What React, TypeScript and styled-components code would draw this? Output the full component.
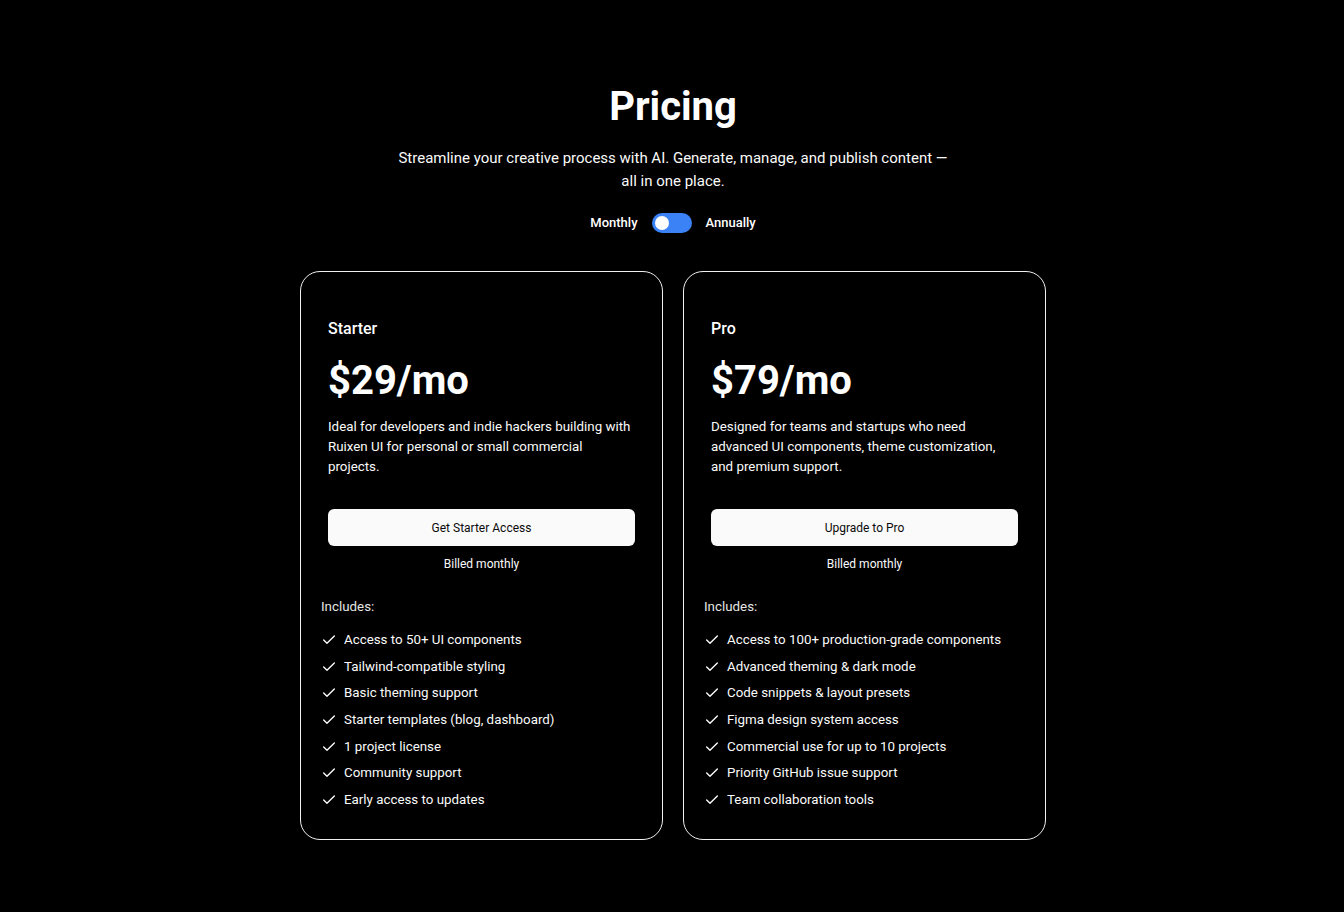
import React, { useState } from "react";
import styled, { createGlobalStyle } from "styled-components";
import { Check } from "lucide-react";

const GlobalStyle = createGlobalStyle`
  html, body {
    margin: 0;
    padding: 0;
    background: #000;
  }
  body {
    font-family: Roboto, "Liberation Sans", Arial, sans-serif;
    color: #fafafa;
    -webkit-font-smoothing: antialiased;
  }
  * {
    box-sizing: border-box;
  }
`;

type Plan = {
  name: string;
  price: string;
  description: string;
  cta: string;
  features: string[];
};

const plans: Plan[] = [
  {
    name: "Starter",
    price: "$29/mo",
    description:
      "Ideal for developers and indie hackers building with Ruixen UI for personal or small commercial projects.",
    cta: "Get Starter Access",
    features: [
      "Access to 50+ UI components",
      "Tailwind-compatible styling",
      "Basic theming support",
      "Starter templates (blog, dashboard)",
      "1 project license",
      "Community support",
      "Early access to updates",
    ],
  },
  {
    name: "Pro",
    price: "$79/mo",
    description:
      "Designed for teams and startups who need advanced UI components, theme customization, and premium support.",
    cta: "Upgrade to Pro",
    features: [
      "Access to 100+ production-grade components",
      "Advanced theming & dark mode",
      "Code snippets & layout presets",
      "Figma design system access",
      "Commercial use for up to 10 projects",
      "Priority GitHub issue support",
      "Team collaboration tools",
    ],
  },
];

const App = () => {
  const [annual, setAnnual] = useState(false);

  return (
    <>
      <GlobalStyle />
      <Page>
        <Header>
          <Title>Pricing</Title>
          <Subtitle>
            Streamline your creative process with AI. Generate, manage, and
            publish content — all in one place.
          </Subtitle>
          <ToggleRow>
            <ToggleLabel>Monthly</ToggleLabel>
            <Switch
              type="button"
              aria-label="Toggle billing period"
              $on={annual}
              onClick={() => setAnnual(!annual)}
            >
              <Thumb />
            </Switch>
            <ToggleLabel>Annually</ToggleLabel>
          </ToggleRow>
        </Header>

        <Cards>
          {plans.map((plan) => (
            <Card key={plan.name}>
              <CardTop>
                <PlanName>{plan.name}</PlanName>
                <Price>{plan.price}</Price>
                <Description>{plan.description}</Description>
                <CtaButton type="button">{plan.cta}</CtaButton>
                <Billing>Billed {annual ? "annually" : "monthly"}</Billing>
              </CardTop>
              <Features>
                <IncludesLabel>Includes:</IncludesLabel>
                <FeatureList>
                  {plan.features.map((f) => (
                    <FeatureItem key={f}>
                      <Check size={16} strokeWidth={2} />
                      <span>{f}</span>
                    </FeatureItem>
                  ))}
                </FeatureList>
              </Features>
            </Card>
          ))}
        </Cards>
      </Page>
    </>
  );
};

const Page = styled.main`
  min-height: 912px;
  padding: 83px 0 60px 2px;
  display: flex;
  flex-direction: column;
  align-items: center;
  background: #000;
`;

const Header = styled.header`
  display: flex;
  flex-direction: column;
  align-items: center;
  text-align: center;
`;

const Title = styled.h1`
  margin: 0;
  font-size: 40px;
  line-height: 48px;
  font-weight: 700;
  color: #fff;
`;

const Subtitle = styled.p`
  margin: 16px 0 0;
  max-width: 560px;
  font-size: 15px;
  line-height: 23px;
  color: #fafafa;
`;

const ToggleRow = styled.div`
  margin-top: 20px;
  display: flex;
  align-items: center;
  gap: 14px;
`;

const ToggleLabel = styled.span`
  font-size: 13px;
  line-height: 20px;
  font-weight: 500;
  color: #fff;
`;

const Switch = styled.button<{ $on: boolean }>`
  width: 40px;
  height: 20px;
  padding: 0 3px;
  border: none;
  border-radius: 10px;
  background: #3b82f6;
  display: flex;
  align-items: center;
  justify-content: ${(p) => (p.$on ? "flex-end" : "flex-start")};
  cursor: pointer;
`;

const Thumb = styled.span`
  width: 14px;
  height: 14px;
  border-radius: 50%;
  background: #fff;
`;

const Cards = styled.section`
  margin-top: 38px;
  display: flex;
  gap: 20px;
`;

const Card = styled.article`
  width: 363px;
  border: 1px solid #f0f0f0;
  border-radius: 20px;
  padding: 45px 0 29px;
  display: flex;
  flex-direction: column;
`;

const CardTop = styled.div`
  padding: 0 27px;
  display: flex;
  flex-direction: column;
`;

const PlanName = styled.h3`
  margin: 0;
  font-size: 16px;
  line-height: 24px;
  font-weight: 500;
  color: #fff;
`;

const Price = styled.div`
  margin-top: 20px;
  font-size: 40px;
  line-height: 40px;
  font-weight: 700;
  color: #fff;
`;

const Description = styled.p`
  margin: 16px 0 0;
  font-size: 13.33px;
  line-height: 20px;
  color: #fafafa;
`;

const CtaButton = styled.button`
  margin-top: 32px;
  height: 37px;
  width: 100%;
  border: none;
  border-radius: 6px;
  background: #fafafa;
  color: #0a0a0a;
  font-family: inherit;
  font-size: 12px;
  font-weight: 400;
  cursor: pointer;
`;

const Billing = styled.div`
  margin-top: 10px;
  text-align: center;
  font-size: 12px;
  line-height: 16px;
  font-weight: 400;
  color: #fafafa;
`;

const Features = styled.div`
  margin-top: 25px;
  padding: 0 20px;
  display: flex;
  flex-direction: column;
`;

const IncludesLabel = styled.div`
  font-size: 13.33px;
  line-height: 20px;
  color: #e5e5e5;
`;

const FeatureList = styled.ul`
  list-style: none;
  margin: 13px 0 0;
  padding: 0;
  display: flex;
  flex-direction: column;
  gap: 6.67px;
`;

const FeatureItem = styled.li`
  display: flex;
  align-items: center;
  gap: 7px;
  font-size: 13.33px;
  line-height: 20px;
  color: #fafafa;

  svg {
    flex-shrink: 0;
    color: #fff;
  }
`;

export default App;
